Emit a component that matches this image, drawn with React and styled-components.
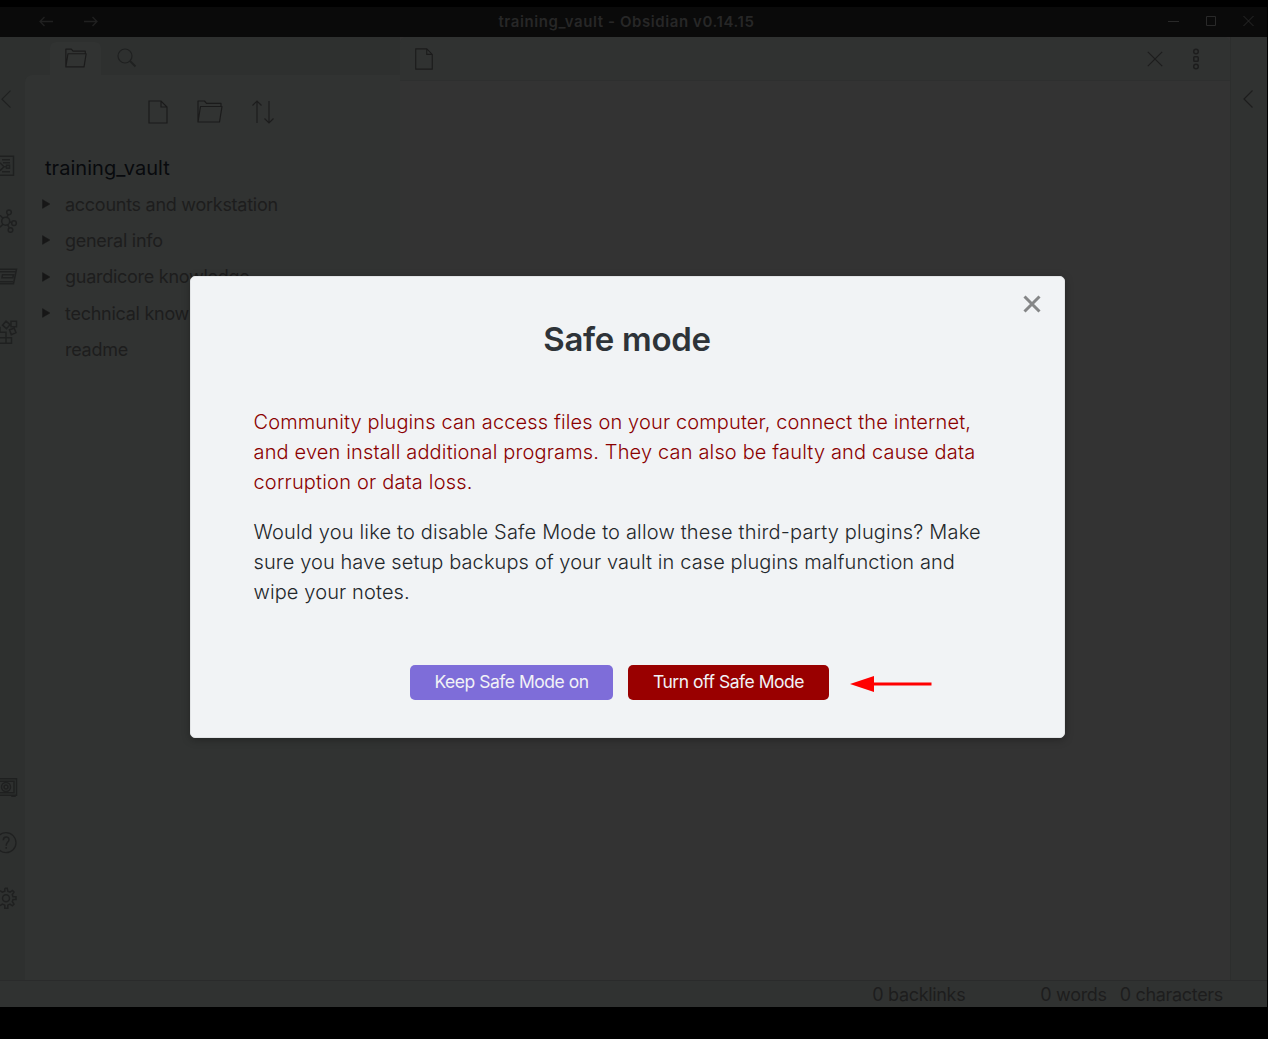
import React from "react";
import styled, { createGlobalStyle } from "styled-components";

const Global = createGlobalStyle`
  * { box-sizing: border-box; }
  body { margin: 0; background: #000; font-family: Inter, "Liberation Sans", sans-serif; }
  svg { display: block; flex: none; }
`;

const Screen = styled.div`
  position: relative;
  width: 1268px;
  height: 1039px;
  padding: 7px 1px 32px 0;
  overflow: hidden;
  background: #000;
`;
const Window = styled.div`
  display: flex;
  flex-direction: column;
  height: 1000px;
  background: #303231;
  color: #1d1d1d;
`;
const TitleBar = styled.header`
  display: flex;
  align-items: center;
  justify-content: space-between;
  height: 30px;
  background: #0a0a0a;
  color: #272727;
`;
const NavButtons = styled.div`
  display: flex;
  width: 180px;
  padding-left: 39px;
  gap: 28px;
`;
const AppTitle = styled.div`
  font-size: 15px;
  line-height: 30px;
  font-weight: 600;
  letter-spacing: 0.58px;
`;
const WindowButtons = styled.div`
  display: flex;
  justify-content: flex-end;
  align-items: center;
  width: 194px;
  padding: 0 12px 2px 0;
  gap: 25px;
`;
const Body = styled.div`
  display: flex;
  flex: 1;
  min-height: 0;
`;
const Ribbon = styled.nav`
  display: flex;
  flex-direction: column;
  width: 25px;
  padding: 34px 0 54px;
  background: #2e302f;
`;
const RibbonGroup = styled.div`
  display: flex;
  flex-direction: column;
  margin-top: ${(p) => p.$top};
`;
const Sidebar = styled.aside`
  display: flex;
  flex-direction: column;
  width: 375px;
  background: #2e302f;
`;
const Tabs = styled.div`
  display: flex;
  height: 38px;
  padding: 5px 0 0 25px;
`;
const Tab = styled.div`
  display: flex;
  justify-content: center;
  align-items: center;
  width: 51px;
  height: 33px;
  padding-bottom: 2px;
  border-radius: 6px 6px 0 0;
  background: ${(p) => (p.$active ? "#313332" : "transparent")};
`;
const Explorer = styled.div`
  flex: 1;
  border-radius: 7px 0 0 0;
  background: #313332;
`;
const Tools = styled.div`
  display: flex;
  justify-content: center;
  align-items: center;
  height: 74px;
  gap: 29px;
  padding: 0 2px 1px 0;
`;
const VaultName = styled.div`
  height: 37px;
  padding-left: 20px;
  font-size: 20px;
  line-height: 38px;
  letter-spacing: 0.04px;
  color: #080a0d;
`;
const TreeRow = styled.div`
  display: flex;
  align-items: center;
  height: 36.3px;
  padding-left: 17px;
  gap: 15px;
  font-size: 18px;
  letter-spacing: -0.27px;
  white-space: nowrap;
`;
const Workspace = styled.main`
  flex: 1;
  background: #333;
`;
const ViewHeader = styled.div`
  display: flex;
  align-items: center;
  height: 44px;
  padding: 0 29px 0 14px;
  border-bottom: 1px solid #2e2f2f;
  border-radius: 6px 6px 0 0;
  background: #303231;
`;
const ViewActions = styled.div`
  display: flex;
  align-items: center;
  margin-left: auto;
  gap: 28px;
`;
const Grow = styled.div`
  flex: 1;
`;
const RightRibbon = styled.nav`
  width: 37px;
  padding: 52px 0 0 11px;
  border-left: 1px solid #2c2e2d;
`;
const StatusBar = styled.footer`
  display: flex;
  justify-content: flex-end;
  height: 27px;
  padding-right: 44px;
  border-top: 1px solid #2a2b2b;
  font-size: 18px;
  line-height: 28px;
  letter-spacing: -0.32px;
  white-space: nowrap;
`;
const Status = styled.span`
  margin-left: ${(p) => p.$gap};
`;
const Overlay = styled.div`
  position: absolute;
  inset: 7px 0 32px 0;
  padding: 269px 203px 0 190px;
`;
const Dialog = styled.section`
  display: flex;
  flex-direction: column;
  width: 875px;
  height: 462px;
  border-radius: 5px;
  border: 1px solid #e2e4e6;
  background: #f1f3f5;
  color: #2e3338;
  box-shadow: 0 2px 8px rgba(0, 0, 0, 0.28);
`;
const DialogTop = styled.div`
  display: flex;
  justify-content: flex-end;
  height: 41px;
  padding: 17px 22px 0 0;
`;
const Heading = styled.h1`
  margin: 0 1px 0 0;
  font-size: 33px;
  line-height: 42px;
  font-weight: 600;
  letter-spacing: -0.3px;
  text-align: center;
`;
const Message = styled.p`
  margin: ${(p) => p.$top} 0 0 62.5px;
  font-size: 20px;
  line-height: 30px;
  font-weight: 300;
  color: ${(p) => (p.$warning ? "#8a0000" : "#23272b")};
`;
const Line = styled.span`
  display: block;
  white-space: nowrap;
  letter-spacing: ${(p) => p.$spacing};
`;
const Actions = styled.div`
  display: flex;
  align-items: center;
  margin: 58px 0 0 219px;
`;
const Button = styled.button`
  width: ${(p) => p.$width};
  height: 35px;
  margin: 0 15px 0 0;
  padding: 0 0 2px;
  border: 0;
  border-radius: 5px;
  background: ${(p) => (p.$danger ? "#990000" : "#7e6dd9")};
  color: #f1f2f6;
  font-family: inherit;
  font-size: 17.5px;
  line-height: 33px;
  letter-spacing: -0.47px;
  white-space: nowrap;
`;
const Pointer = styled.svg`
  margin-top: 3px;
`;

const Icon = ({ w, h, sw = 1.2, color = "#1d1d1d", children }) => (
  <svg width={w} height={h} viewBox={`0 0 ${w} ${h}`} fill="none" stroke={color} strokeWidth={sw}>
    {children}
  </svg>
);
const RibbonIcon = ({ children }) => (
  <svg width="25" height="55.33" viewBox="0 0 25 56" preserveAspectRatio="xMinYMid slice" fill="none" stroke="#1f2020" strokeWidth="1.5">
    {children}
  </svg>
);
const FileIcon = ({ w, h }) => (
  <svg width={w} height={h} viewBox="0 0 20 24" fill="none" stroke="#1b1b1b" strokeWidth="1.2">
    <path d="M1 1H13L19 7V23H1ZM13 1V7H19" />
  </svg>
);
const FolderIcon = ({ w, h, sw = 1.2 }) => (
  <svg width={w} height={h} viewBox="0 0 26 23" fill="none" stroke="#1b1b1b" strokeWidth={sw} strokeLinejoin="round">
    <path d="M1 22V1H7.5L9.5 3.3H24V6.5M1 22L3.5 6.5H25L22.5 22Z" />
  </svg>
);
const Arrow = () => (
  <svg width="8" height="10" viewBox="0 0 8 10">
    <path d="M.6 .7V9.3L7.8 5Z" fill="#171717" stroke="#171717" strokeWidth=".6" strokeLinejoin="round" />
  </svg>
);

const folders = ["accounts and workstation", "general info", "guardicore knowledge", "technical knowledge"];

export default function App() {
  return (
    <Screen>
      <Global />
      <Window>
        <TitleBar>
          <NavButtons>
            <Icon w={16} h={14} color="#202020" sw={1.3}><path d="M14 6.5H1M5.5 2L1 6.5L5.5 11" /></Icon>
            <Icon w={16} h={14} color="#202020" sw={1.3}><path d="M1 6.5H14M9.5 2L14 6.5L9.5 11" /></Icon>
          </NavButtons>
          <AppTitle>training_vault - Obsidian v0.14.15</AppTitle>
          <WindowButtons>
            <Icon w={13} h={12} color="#292929" sw={1}><path d="M1 6.5H12" /></Icon>
            <Icon w={12} h={12} color="#292929" sw={1}><path d="M1.5 1.5H10.5V10.5H1.5Z" /></Icon>
            <Icon w={13} h={12} color="#292929" sw={1}><path d="M1.5 1L11.5 11M11.5 1L1.5 11" /></Icon>
          </WindowButtons>
        </TitleBar>
        <Body>
          <Ribbon>
            <RibbonIcon><path d="M10.5 20L2 28.5L10.5 37" strokeWidth="1.2" /></RibbonIcon>
            <RibbonGroup $top="12px">
              <RibbonIcon><path d="M0 18.5H13.5V37.5H0M2 22H10M3 25H10M2 34H10M0 25L4 29L0 33M6.5 27.5H9.5V30.5H6.5ZM4 29H6.5" /></RibbonIcon>
              <RibbonIcon>
                <circle cx="5.7" cy="27.5" r="4" /><circle cx="9" cy="18.7" r="2.3" /><circle cx="14" cy="29.5" r="2.3" /><circle cx="10.5" cy="36.3" r="2.3" />
                <path d="M7 23.8L8.2 21M9.8 28.3L11.7 29M7.5 31L9.3 34.2M3 24.5L0 21.5M3 30.5L0 33.5" />
              </RibbonIcon>
              <RibbonIcon><path d="M0 20.5H16.5L13.5 35H0M0 23H15.5M2.5 26H13.5L12.8 29H2ZM0 33H13" /></RibbonIcon>
              <RibbonIcon><path d="M0 28.5H6V39.5H0M0 34H11.5V39.5H0M6 28.5H0V23M11 17.5H16.5V23H11ZM6 17.5L10 21L6.5 25L2.5 21.5ZM9.5 26L14.2 24.5L16 29L11.3 31ZM6 34V39.5" /></RibbonIcon>
            </RibbonGroup>
            <Grow />
            <RibbonGroup $top="0">
              <RibbonIcon><path d="M0 19H16.5V35.5H0M0 21.5H14V33H0M12 35V36.5H15V35" /><circle cx="6" cy="27.3" r="4.5" /><circle cx="6" cy="27.3" r="2" /></RibbonIcon>
              <RibbonIcon><circle cx="6" cy="28" r="10" strokeWidth="1.3" /><path d="M3.3 25.5C3.3 21.5 9 21.5 9 25C9 27.5 6.2 27.5 6.2 31M6.2 32.3V34" /></RibbonIcon>
              <RibbonIcon>
                <circle cx="6" cy="27.5" r="3.5" />
                <path d="M4.8 17.5H7.2L7.8 20.5L10 21.5L12.5 19.8L14 21.5L12.3 24L13 26.2H16V28.8H13L12.3 31L14 33.5L12.3 35.2L10 33.5L7.8 34.5V37.5H4.8V34.5L2.3 33.5L0 35M4.8 17.5V20.5L2.3 21.5L0 20" />
              </RibbonIcon>
            </RibbonGroup>
          </Ribbon>
          <Sidebar>
            <Tabs>
              <Tab $active><FolderIcon w={22} h={20} sw={1.4} /></Tab>
              <Tab><Icon w={20} h={20} color="#1f2020"><circle cx="8" cy="8" r="7" /><path d="M13 13L18.5 18.5" strokeWidth="1.8" /></Icon></Tab>
            </Tabs>
            <Explorer>
              <Tools>
                <FileIcon w={20} h={24} />
                <FolderIcon w={26} h={23} />
                <Icon w={24} h={24}><path d="M5 23V1M.5 5.5L5 1L9.5 5.5M17 1V23M12.5 18.5L17 23L21.5 18.5" /></Icon>
              </Tools>
              <VaultName>training_vault</VaultName>
              {folders.map((f) => (
                <TreeRow key={f}><Arrow /><span>{f}</span></TreeRow>
              ))}
              <TreeRow><Icon w={8} h={10} /><span>readme</span></TreeRow>
            </Explorer>
          </Sidebar>
          <Workspace>
            <ViewHeader>
              <FileIcon w={20} h={22} />
              <ViewActions>
                <Icon w={16} h={16}><path d="M.8 .8L15.2 15.2M15.2 .8L.8 15.2" /></Icon>
                <Icon w={10} h={22} sw={1.5}><circle cx="5" cy="3.5" r="2.3" /><rect x="2.8" y="8.8" width="4.4" height="4.4" rx=".8" /><circle cx="5" cy="18.5" r="2.3" /></Icon>
              </ViewActions>
            </ViewHeader>
          </Workspace>
          <RightRibbon>
            <Icon w={12} h={20}><path d="M10.5 1.5L2 10L10.5 18.5" /></Icon>
          </RightRibbon>
        </Body>
        <StatusBar>
          <Status>0 backlinks</Status>
          <Status $gap="75px">0 words</Status>
          <Status $gap="13px">0 characters</Status>
        </StatusBar>
      </Window>
      <Overlay>
        <Dialog>
          <DialogTop><Icon w={20} h={20} color="#858687" sw={3}><path d="M2.5 2.5L17.5 17.5M17.5 2.5L2.5 17.5" /></Icon></DialogTop>
          <Heading>Safe mode</Heading>
          <Message $warning $top="47px">
            <Line $spacing="0.133px">Community plugins can access files on your computer, connect the internet,</Line>
            <Line $spacing="0.155px">and even install additional programs. They can also be faulty and cause data</Line>
            <Line $spacing="0.19px">corruption or data loss.</Line>
          </Message>
          <Message $top="20px">
            <Line $spacing="0.17px">Would you like to disable Safe Mode to allow these third-party plugins? Make</Line>
            <Line $spacing="0.092px">sure you have setup backups of your vault in case plugins malfunction and</Line>
            <Line $spacing="0.12px">wipe your notes.</Line>
          </Message>
          <Actions>
            <Button $width="203px">Keep Safe Mode on</Button>
            <Button $danger $width="201px">Turn off Safe Mode</Button>
            <Pointer width="90" height="20" viewBox="0 0 90 20">
              <path d="M6 10L30 2V18Z" fill="#f00" />
              <path d="M29 10H87.5" stroke="#f00" strokeWidth="2.8" />
            </Pointer>
          </Actions>
        </Dialog>
      </Overlay>
    </Screen>
  );
}
